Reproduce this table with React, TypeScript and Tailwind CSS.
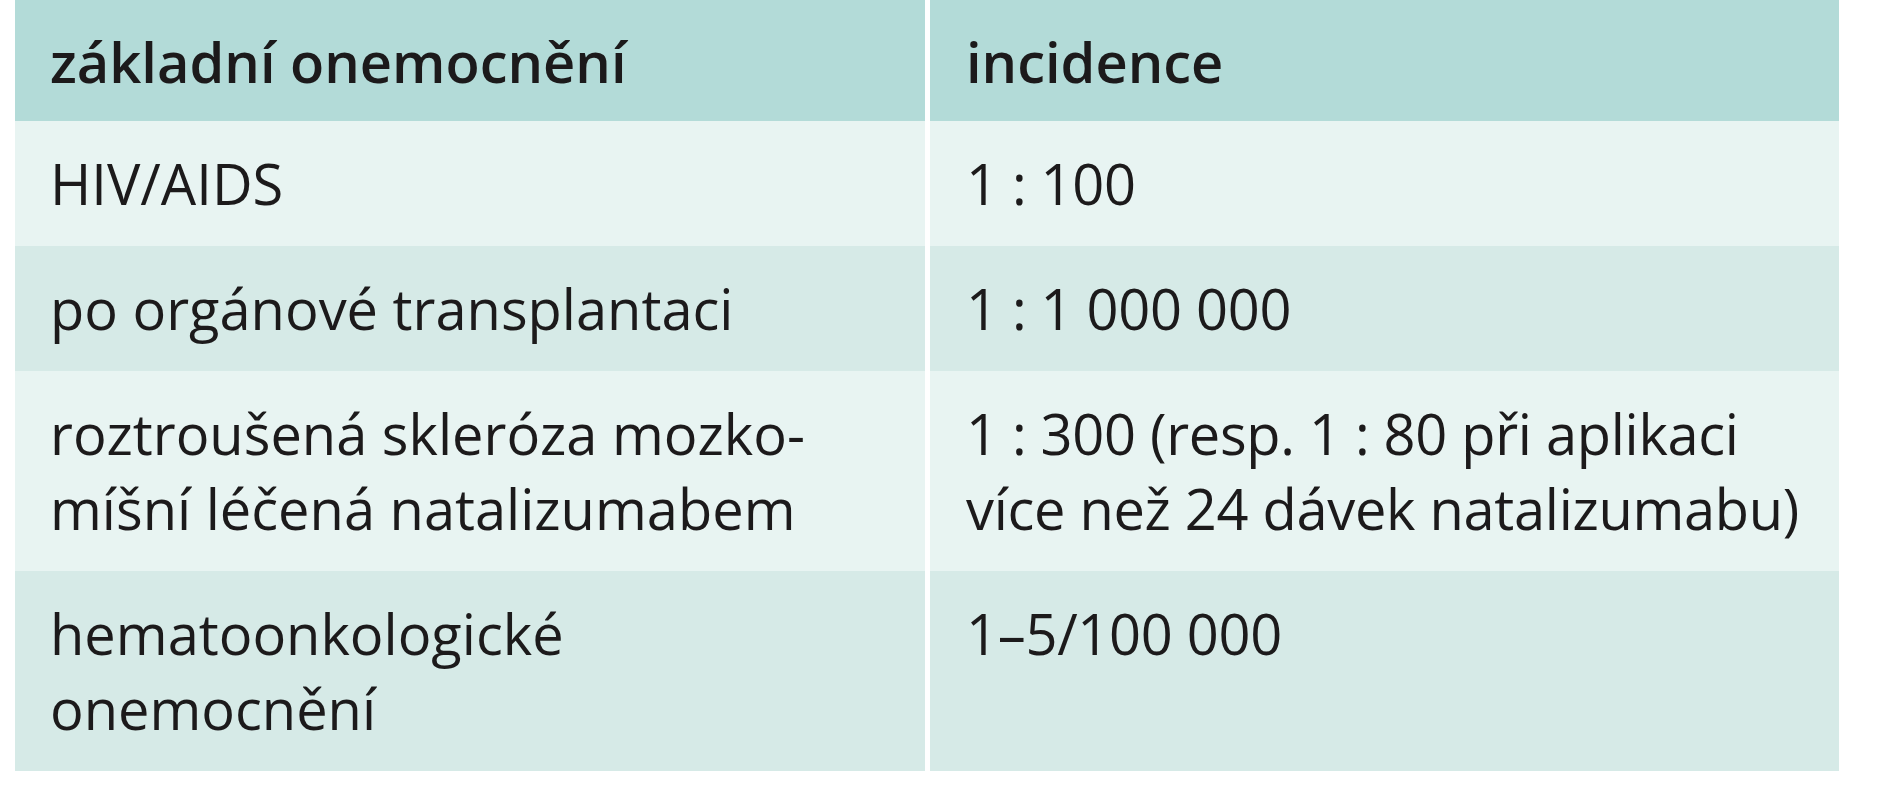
const rows: { disease: React.ReactNode; incidence: React.ReactNode }[] = [
  { disease: 'HIV/AIDS', incidence: '1 : 100' },
  { disease: 'po orgánové transplantaci', incidence: '1 : 1 000 000' },
  {
    disease: (
      <>
        roztroušená skleróza mozko-
        <br />
        míšní léčená natalizumabem
      </>
    ),
    incidence: (
      <>
        1 : 300 (resp. 1 : 80 při aplikaci
        <br />
        více než 24 dávek natalizumabu)
      </>
    ),
  },
  {
    disease: (
      <>
        hematoonkologické
        <br />
        onemocnění
      </>
    ),
    incidence: '1–5/100 000',
  },
]

export default function App() {
  return (
    <div className="w-[1881px] h-[800px] bg-white overflow-hidden font-['Open_Sans',sans-serif] text-[#1c1a1b]">
      <div className="ml-[15px] w-[1824px] grid grid-cols-[910px_909px] gap-x-[5px] text-[56px] leading-[75px] whitespace-nowrap">
        {/* header */}
        <div className="bg-[#b3dbd8] px-[35px] pt-[24px] pb-[22px] font-semibold">základní onemocnění</div>
        <div className="bg-[#b3dbd8] px-[36px] pt-[24px] pb-[22px] font-semibold">incidence</div>

        {rows.map((r, i) => {
          const bg = i % 2 === 0 ? 'bg-[#e8f4f2]' : 'bg-[#d6eae7]'
          return (
            <div key={i} className="contents">
              <div className={`${bg} px-[35px] py-[25px]`}>{r.disease}</div>
              <div className={`${bg} pl-[36px] pr-[8px] py-[25px] tracking-[-0.3px]`}>{r.incidence}</div>
            </div>
          )
        })}
      </div>
    </div>
  )
}
